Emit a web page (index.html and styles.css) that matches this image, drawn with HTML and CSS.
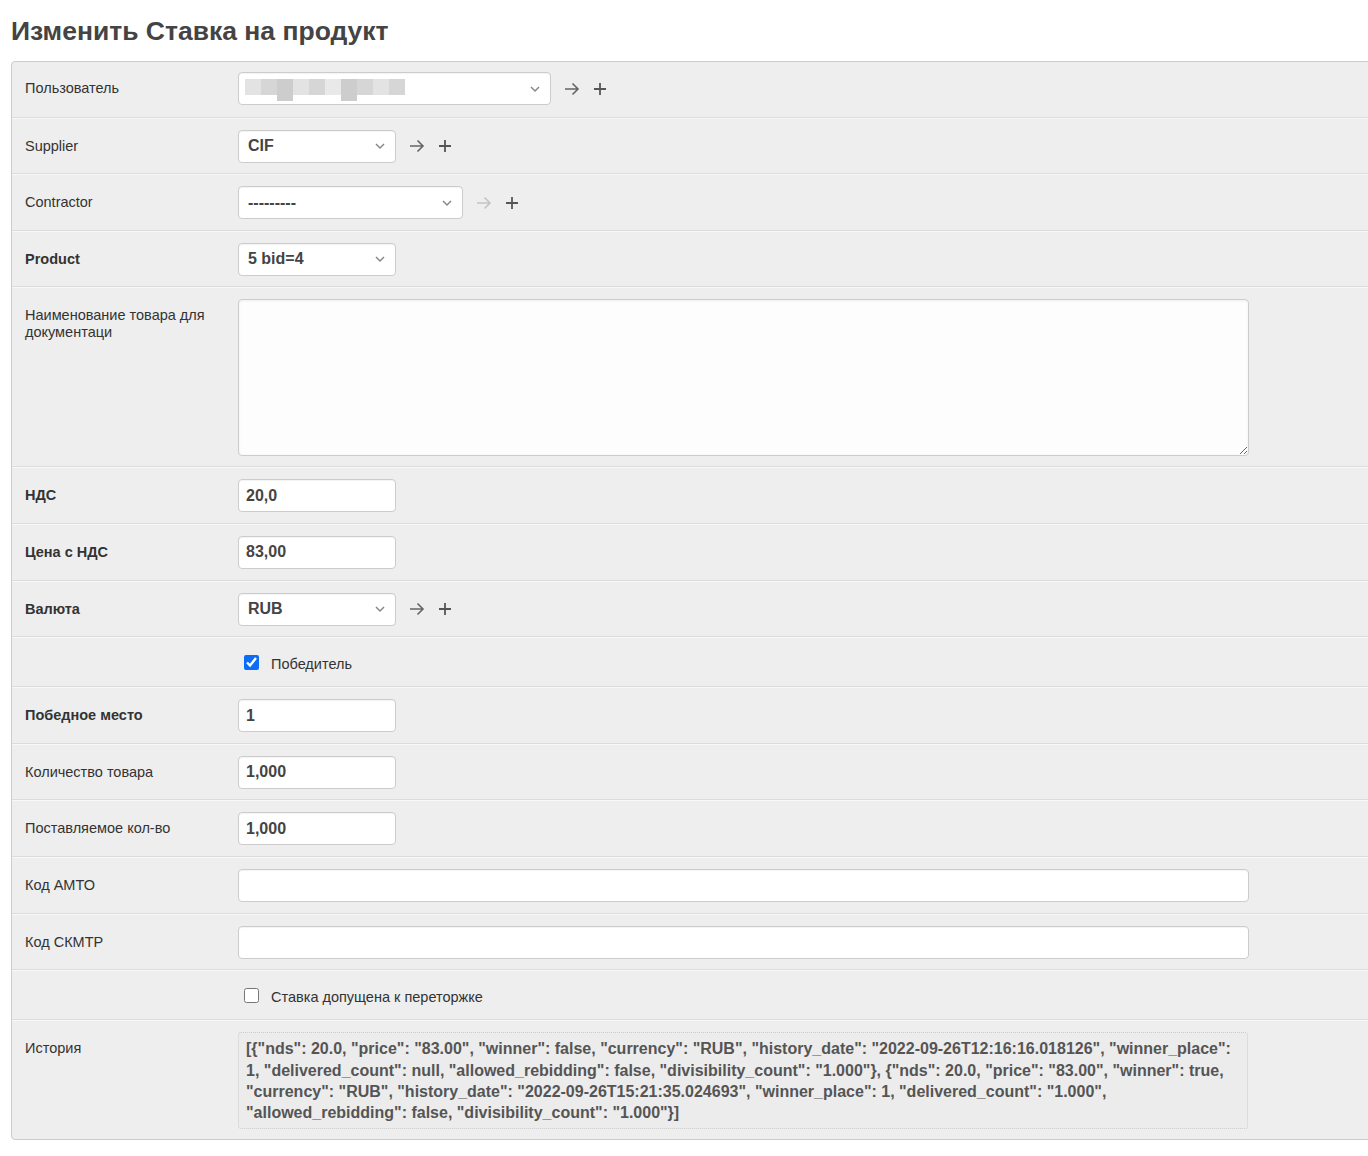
FILE: index.html
```html
<!DOCTYPE html>
<html lang="ru">
<head>
<meta charset="utf-8">
<title>Изменить Ставка на продукт</title>
<link rel="stylesheet" href="styles.css">
</head>
<body>
<div class="page">
  <h1 class="title">Изменить Ставка на продукт</h1>
  <div class="fieldset">
    <div class="row first">
      <div class="label">Пользователь</div>
      <div class="field">
        <div class="select w-user">
          <div class="blur">
            <span class="px p1"></span><span class="px p2"></span><span class="px p3"></span><span class="px p1"></span><span class="px p2"></span><span class="px p4"></span><span class="px p3"></span><span class="px p2"></span><span class="px p1"></span><span class="px p2"></span>
          </div>
          <span class="chev"><svg width="12" height="8" viewBox="0 0 12 8"><path d="M2 2l4 4 4-4" fill="none" stroke="#888" stroke-width="1.5"/></svg></span>
        </div>
        <span class="ic"><svg width="16" height="14" viewBox="0 0 16 14"><path d="M1 7h13M8.5 1.5L14 7l-5.5 5.5" fill="none" stroke="#666" stroke-width="1.6"/></svg></span>
        <span class="ic"><svg width="14" height="14" viewBox="0 0 14 14"><path d="M7 1v12M1 7h12" fill="none" stroke="#555" stroke-width="1.8"/></svg></span>
      </div>
    </div>
    <div class="row">
      <div class="label">Supplier</div>
      <div class="field">
        <div class="select w-small"><span class="val">CIF</span><span class="chev"><svg width="12" height="8" viewBox="0 0 12 8"><path d="M2 2l4 4 4-4" fill="none" stroke="#888" stroke-width="1.5"/></svg></span></div>
        <span class="ic"><svg width="16" height="14" viewBox="0 0 16 14"><path d="M1 7h13M8.5 1.5L14 7l-5.5 5.5" fill="none" stroke="#666" stroke-width="1.6"/></svg></span>
        <span class="ic"><svg width="14" height="14" viewBox="0 0 14 14"><path d="M7 1v12M1 7h12" fill="none" stroke="#555" stroke-width="1.8"/></svg></span>
      </div>
    </div>
    <div class="row">
      <div class="label">Contractor</div>
      <div class="field">
        <div class="select w-mid"><span class="val">---------</span><span class="chev"><svg width="12" height="8" viewBox="0 0 12 8"><path d="M2 2l4 4 4-4" fill="none" stroke="#888" stroke-width="1.5"/></svg></span></div>
        <span class="ic"><svg width="16" height="14" viewBox="0 0 16 14"><path d="M1 7h13M8.5 1.5L14 7l-5.5 5.5" fill="none" stroke="#c4c4c4" stroke-width="1.6"/></svg></span>
        <span class="ic"><svg width="14" height="14" viewBox="0 0 14 14"><path d="M7 1v12M1 7h12" fill="none" stroke="#555" stroke-width="1.8"/></svg></span>
      </div>
    </div>
    <div class="row">
      <div class="label req">Product</div>
      <div class="field">
        <div class="select w-small"><span class="val">5 bid=4</span><span class="chev"><svg width="12" height="8" viewBox="0 0 12 8"><path d="M2 2l4 4 4-4" fill="none" stroke="#888" stroke-width="1.5"/></svg></span></div>
      </div>
    </div>
    <div class="row ta-row">
      <div class="label">Наименование товара для документаци</div>
      <div class="field">
        <textarea class="textarea"></textarea>
      </div>
    </div>
    <div class="row">
      <div class="label req">НДС</div>
      <div class="field"><input class="input w-small" type="text" value="20,0"></div>
    </div>
    <div class="row">
      <div class="label req">Цена с НДС</div>
      <div class="field"><input class="input w-small" type="text" value="83,00"></div>
    </div>
    <div class="row">
      <div class="label req">Валюта</div>
      <div class="field">
        <div class="select w-small"><span class="val">RUB</span><span class="chev"><svg width="12" height="8" viewBox="0 0 12 8"><path d="M2 2l4 4 4-4" fill="none" stroke="#888" stroke-width="1.5"/></svg></span></div>
        <span class="ic"><svg width="16" height="14" viewBox="0 0 16 14"><path d="M1 7h13M8.5 1.5L14 7l-5.5 5.5" fill="none" stroke="#666" stroke-width="1.6"/></svg></span>
        <span class="ic"><svg width="14" height="14" viewBox="0 0 14 14"><path d="M7 1v12M1 7h12" fill="none" stroke="#555" stroke-width="1.8"/></svg></span>
      </div>
    </div>
    <div class="row check-row">
      <div class="label"></div>
      <label class="check"><input type="checkbox" checked><span>Победитель</span></label>
    </div>
    <div class="row">
      <div class="label req">Победное место</div>
      <div class="field"><input class="input w-small" type="text" value="1"></div>
    </div>
    <div class="row">
      <div class="label">Количество товара</div>
      <div class="field"><input class="input w-small" type="text" value="1,000"></div>
    </div>
    <div class="row">
      <div class="label">Поставляемое кол-во</div>
      <div class="field"><input class="input w-small" type="text" value="1,000"></div>
    </div>
    <div class="row">
      <div class="label">Код АМТО</div>
      <div class="field"><input class="input w-wide" type="text" value=""></div>
    </div>
    <div class="row">
      <div class="label">Код СКМТР</div>
      <div class="field"><input class="input w-wide" type="text" value=""></div>
    </div>
    <div class="row check-row">
      <div class="label"></div>
      <label class="check"><input type="checkbox"><span>Ставка допущена к переторжке</span></label>
    </div>
    <div class="row last">
      <div class="label">История</div>
      <div class="field">
        <div class="readonly">[{"nds": 20.0, "price": "83.00", "winner": false, "currency": "RUB", "history_date": "2022-09-26T12:16:16.018126", "winner_place": 1, "delivered_count": null, "allowed_rebidding": false, "divisibility_count": "1.000"}, {"nds": 20.0, "price": "83.00", "winner": true, "currency": "RUB", "history_date": "2022-09-26T15:21:35.024693", "winner_place": 1, "delivered_count": "1.000", "allowed_rebidding": false, "divisibility_count": "1.000"}]</div>
      </div>
    </div>
  </div>
</div>
</body>
</html>
```

FILE: styles.css
```css
html, body {
  margin: 0;
  padding: 0;
  background: #fff;
  overflow-x: hidden;
}
body {
  font-family: "Liberation Sans", Arial, sans-serif;
  color: #333;
  font-size: 14px;
}
.page {
  padding: 0 0 16px 11px;
}
.title {
  margin: 0;
  padding: 15px 0 14px 0;
  font-size: 26.5px;
  line-height: 32px;
  font-weight: bold;
  color: #444;
}
.fieldset {
  background: #eee;
  border: 1px solid #ccc;
  border-radius: 4px;
  margin-right: -30px;
}
.row {
  display: flex;
  align-items: flex-start;
  padding: 11px 0 10.6px;
  border-top: 1px solid #f8f8f8;
  border-bottom: 1px solid #dcdcdc;
}
.row.first { border-top: none; padding: 10px 0 11.6px; }
.row.ta-row { padding: 11px 0 10px; }
.row.last { border-bottom: none; padding: 11px 0 10px; }
.label {
  flex: 0 0 200px;
  padding: 8px 13px 0 13px;
  line-height: 17px;
  font-size: 14.5px;
  color: #333;
}
.label.req { font-weight: bold; }
.field {
  display: flex;
  align-items: center;
  flex: 1;
}
.select, .input {
  box-sizing: border-box;
  height: 33px;
  background: #fff;
  border: 1px solid #ccc;
  border-radius: 4px;
  box-shadow: inset 0 1px 1px rgba(0,0,0,0.05);
  font-family: "Liberation Sans", Arial, sans-serif;
  font-size: 16px;
  font-weight: bold;
  color: #444;
}
.input {
  padding: 0 7px;
  outline: none;
}
.select {
  display: flex;
  align-items: center;
  padding: 0 0 0 9px;
}
.select .val { flex: 1; }
.chev {
  display: flex;
  align-items: center;
  justify-content: center;
  width: 22px;
  height: 26px;
  margin-right: 4px;
  background: #fff;
}
.w-small { width: 158px; }
.w-mid { width: 225px; }
.w-user { width: 313px; }
.w-wide { width: 1011px; }
.blur {
  flex: 1;
  display: flex;
  align-items: flex-start;
  height: 22px;
  margin-left: -3px;
  padding-top: 2px;
}
.px { display: block; width: 16px; height: 16px; }
.p1 { background: #e3e3e3; }
.p2 { background: #d6d6d6; }
.p3 { background: #cdcdcd; height: 22px; }
.p4 { background: #e9e9e9; }
.ic {
  display: flex;
  align-items: center;
  margin-left: 13px;
}
.textarea {
  box-sizing: border-box;
  width: 1011px;
  height: 157px;
  border: 1px solid #ccc;
  border-radius: 4px;
  background: #fdfdfd;
  box-shadow: inset 0 1px 3px rgba(0,0,0,0.06);
  resize: both;
  margin: 0;
}
.row.check-row {
  padding: 0;
  height: 48px;
  align-items: center;
}
.check-row .label { padding-top: 0; }
.check {
  display: flex;
  align-items: center;
  gap: 12px;
  padding-left: 6px;
  color: #333;
  font-size: 14.5px;
}
.check input {
  width: 15px;
  height: 15px;
  margin: 0;
  accent-color: #0b6cf5;
}
.check span { padding-top: 4px; }
.readonly {
  box-sizing: border-box;
  width: 1010px;
  padding: 5px 8px 4px 7px;
  border: 1px dotted #ccc;
  border-radius: 3px;
  background: #ececec;
  font-size: 16px;
  font-weight: bold;
  line-height: 21.4px;
  color: #555;
}
```
